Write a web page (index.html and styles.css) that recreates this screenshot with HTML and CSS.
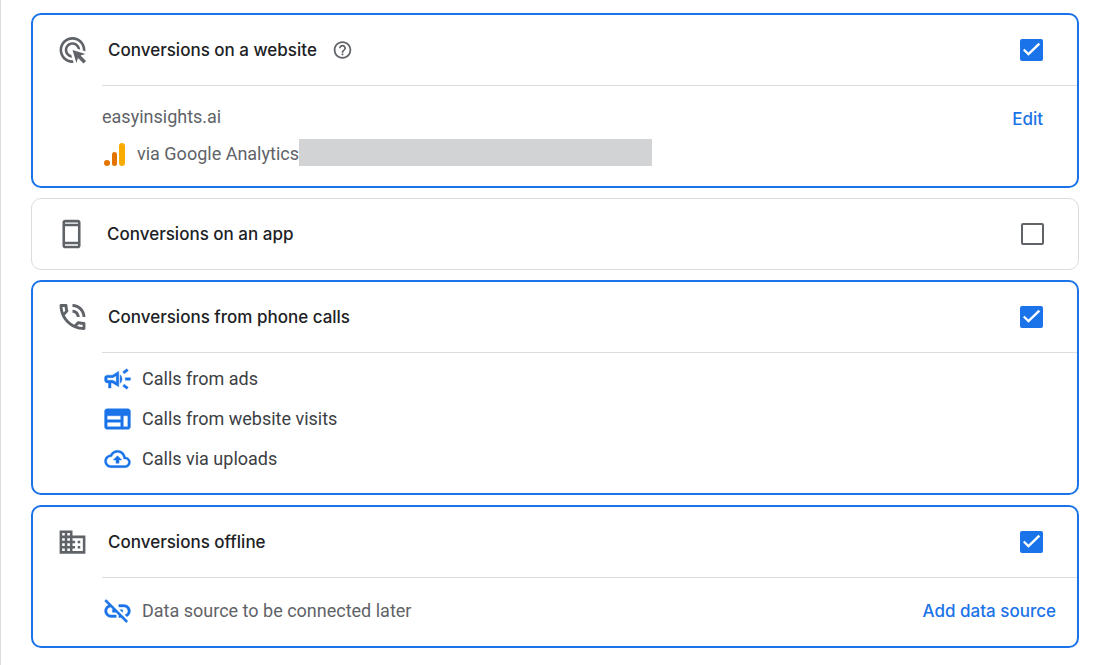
FILE: index.html
```html
<!DOCTYPE html>
<html lang="en">
<head>
  <meta charset="UTF-8">
  <title>Conversion goals</title>
  <link rel="stylesheet" href="styles.css">
</head>
<body>
  <main class="cards">

    <section class="card selected">
      <div class="card-header">
        <svg class="icon" viewBox="0 0 24 24"><path d="M11.71 17.99C8.53 17.84 6 15.22 6 12c0-3.31 2.69-6 6-6 3.22 0 5.84 2.53 5.99 5.71l-2.1-.63C15.48 9.31 13.89 8 12 8c-2.21 0-4 1.79-4 4 0 1.89 1.31 3.48 3.08 3.89l.63 2.1zM22 12c0 .3-.01.6-.04.9l-1.97-.59c.01-.1.01-.21.01-.31 0-4.42-3.58-8-8-8s-8 3.58-8 8 3.58 8 8 8c.1 0 .21 0 .31-.01l.59 1.97c-.3.03-.6.04-.9.04-5.52 0-10-4.48-10-10S6.48 2 12 2s10 4.48 10 10zm-3.77 4.26L22 15l-10-3 3 10 1.26-3.77 4.27 4.27 1.98-1.98-4.28-4.26z"/></svg>
        <label class="title" for="website">Conversions on a website</label>
        <button class="help" type="button" aria-label="Help">
          <svg viewBox="0 0 24 24"><path d="M11 18h2v-2h-2v2zm1-16C6.48 2 2 6.48 2 12s4.48 10 10 10 10-4.48 10-10S17.52 2 12 2zm0 18c-4.41 0-8-3.59-8-8s3.59-8 8-8 8 3.59 8 8-3.59 8-8 8zm0-14c-2.21 0-4 1.79-4 4h2c0-1.1.9-2 2-2s2 .9 2 2c0 2-3 1.75-3 5h2c0-2.25 3-2.5 3-5 0-2.21-1.79-4-4-4z"/></svg>
        </button>
        <input class="check" id="website" type="checkbox" checked>
      </div>
      <div class="card-body website">
        <div class="source">
          <div class="domain">easyinsights.ai</div>
          <div class="analytics">
            <svg class="ga" viewBox="0 0 24 24">
              <circle cx="3" cy="21" r="3" fill="#e37400"/>
              <rect x="8" y="10" width="5" height="14" rx="2.5" fill="#e37400"/>
              <rect x="15" y="1" width="6" height="23" rx="3" fill="#f9ab00"/>
            </svg>
            <span>via Google Analytics</span>
            <span class="redacted"></span>
          </div>
        </div>
        <a class="action" href="#">Edit</a>
      </div>
    </section>

    <section class="card">
      <div class="card-header">
        <svg class="icon" viewBox="0 0 24 24"><path d="M17 1H7c-1.1 0-2 .9-2 2v18c0 1.1.9 2 2 2h10c1.1 0 2-.9 2-2V3c0-1.1-.9-2-2-2zm0 20H7v-1h10v1zm0-3H7V6h10v12zm0-14H7V3h10v1z"/></svg>
        <label class="title" for="app">Conversions on an app</label>
        <input class="check" id="app" type="checkbox">
      </div>
    </section>

    <section class="card selected">
      <div class="card-header">
        <svg class="icon" viewBox="1.2 1.2 21.6 21.6"><path d="M20 15.5c-1.25 0-2.45-.2-3.57-.57-.1-.03-.21-.05-.31-.05-.26 0-.51.1-.71.29l-2.2 2.2c-2.83-1.44-5.15-3.75-6.59-6.59l2.2-2.2c.28-.28.36-.67.25-1.02C8.7 6.45 8.5 5.25 8.5 4c0-.55-.45-1-1-1H4c-.55 0-1 .45-1 1 0 9.39 7.61 17 17 17 .55 0 1-.45 1-1v-3.5c0-.55-.45-1-1-1zM5.03 5h1.5c.07.88.22 1.75.46 2.59L5.79 8.8c-.41-1.21-.67-2.48-.76-3.8zM19 18.97c-1.32-.09-2.59-.35-3.8-.75l1.2-1.2c.85.24 1.71.39 2.6.45v1.5zM19 12h2c0-4.97-4.03-9-9-9v2c3.87 0 7 3.13 7 7zm-4 0h2c0-2.76-2.24-5-5-5v2c1.66 0 3 1.34 3 3z"/></svg>
        <label class="title" for="calls">Conversions from phone calls</label>
        <input class="check" id="calls" type="checkbox" checked>
      </div>
      <ul class="card-body call-list">
        <li>
          <svg class="icon" viewBox="0 0 24 24"><path d="M18 11v2h4v-2h-4zm-2 6.61c.96.71 2.21 1.65 3.2 2.39.4-.53.8-1.07 1.2-1.6-.99-.74-2.24-1.68-3.2-2.4-.4.54-.8 1.08-1.2 1.61zM20.4 5.6c-.4-.53-.8-1.07-1.2-1.6-.99.74-2.24 1.68-3.2 2.4.4.53.8 1.07 1.2 1.6.96-.72 2.21-1.65 3.2-2.4zM4 9c-1.1 0-2 .9-2 2v2c0 1.1.9 2 2 2h1v4h2v-4h1l5 3V6L8 9H4zm5.03 1.71L11 9.53v4.94l-1.97-1.18-.48-.29H4v-2h4.55l.48-.29zM15.5 12c0-1.33-.58-2.53-1.5-3.35v6.69c.92-.81 1.5-2.01 1.5-3.34z"/></svg>
          Calls from ads
        </li>
        <li>
          <svg class="icon" viewBox="0 0 24 24"><path fill-rule="evenodd" d="M20 4H4c-1.1 0-2 .9-2 2v12c0 1.1.9 2 2 2h16c1.1 0 2-.9 2-2V6c0-1.1-.9-2-2-2zM4 9.5h10.5v3H4zM4 14.5h10.5V18H4zM16.5 9.5H20V18h-3.5z"/></svg>
          Calls from website visits
        </li>
        <li>
          <svg class="icon" viewBox="-2.3 -2.3 28.6 28.6"><path d="M19.35 10.04C18.67 6.59 15.64 4 12 4 9.11 4 6.6 5.64 5.35 8.04 2.34 8.36 0 10.91 0 14c0 3.31 2.69 6 6 6h13c2.76 0 5-2.24 5-5 0-2.64-2.05-4.78-4.65-4.96zM19 18H6c-2.21 0-4-1.79-4-4 0-2.05 1.53-3.76 3.56-3.97l1.07-.11.5-.95C8.08 7.14 9.94 6 12 6c2.62 0 4.88 1.86 5.39 4.43l.3 1.5 1.53.11c1.56.1 2.78 1.41 2.78 2.96 0 1.65-1.35 3-3 3zM8 13h2.55v3h2.9v-3H16l-4-4z"/></svg>
          Calls via uploads
        </li>
      </ul>
    </section>

    <section class="card selected">
      <div class="card-header">
        <svg class="icon" viewBox="0 0 24 24"><path d="M12 7V3H2v18h20V7H12zM6 19H4v-2h2v2zm0-4H4v-2h2v2zm0-4H4V9h2v2zm0-4H4V5h2v2zm4 12H8v-2h2v2zm0-4H8v-2h2v2zm0-4H8V9h2v2zm0-4H8V5h2v2zm10 12h-8v-2h2v-2h-2v-2h2v-2h-2V9h8v10zm-2-8h-2v2h2v-2zm0 4h-2v2h2v-2z"/></svg>
        <label class="title" for="offline">Conversions offline</label>
        <input class="check" id="offline" type="checkbox" checked>
      </div>
      <div class="card-body offline">
        <svg class="icon" viewBox="0 0 24 24"><path d="M17 7h-4v1.9h4c1.71 0 3.1 1.39 3.1 3.1 0 1.43-.98 2.63-2.31 2.98l1.46 1.46C20.88 15.61 22 13.95 22 12c0-2.76-2.24-5-5-5zm-1 4h-2.19l2 2H16v-2zM2 4.27l3.11 3.11C3.29 8.12 2 9.91 2 12c0 2.76 2.24 5 5 5h4v-1.9H7c-1.71 0-3.1-1.39-3.1-3.1 0-1.59 1.21-2.9 2.76-3.07L8.73 11H8v2h2.73L13 15.27V17h1.73l4.01 4L20 19.74 3.27 3 2 4.27z"/></svg>
        <span>Data source to be connected later</span>
        <a class="action" href="#">Add data source</a>
      </div>
    </section>

  </main>
</body>
</html>
```
FILE: styles.css
```css
* {
  box-sizing: border-box;
}
body {
  margin: 0;
  background-color: #fff;
  font-family: Roboto, Arial, sans-serif;
  font-size: 18px;
  line-height: 24px;
  color: #5f6368;
}
.cards {
  display: flex;
  flex-direction: column;
  gap: 10px;
  min-height: 100vh;
  padding: 13px 24px 16px 30px;
  border-left: 1px solid #dadce0;
}
.card {
  border: 1px solid #dadce0;
  border-radius: 10px;
}
.card.selected {
  border: 2px solid #1a73e8;
}
.card-header {
  display: flex;
  align-items: center;
  height: 70px;
  padding: 0 34px 0 24px;
}
.icon {
  flex: none;
  width: 31px;
  height: 32px;
  fill: #5f6368;
}
.title {
  margin-left: 20px;
  font-family: Inter, sans-serif;
  font-size: 17px;
  font-weight: 500;
  color: #202124;
}
.help {
  display: flex;
  margin-left: 15px;
  padding: 0;
  border: none;
  background: none;
  cursor: pointer;
}
.help svg {
  width: 21px;
  height: 22px;
  fill: #5f6368;
}

/* checkbox */
.check {
  appearance: none;
  flex: none;
  width: 23px;
  height: 22px;
  margin: 0 0 0 auto;
  border: 2px solid #5f6368;
  border-radius: 2px;
  cursor: pointer;
}
.check:checked {
  border-color: #1a73e8;
  background-color: #1a73e8;
}
.check:checked::before {
  content: "";
  display: block;
  height: 100%;
  background-color: #fff;
  clip-path: polygon(5% 51%, 13% 43%, 34% 64%, 87% 10%, 96% 19%, 34% 82%);
}

.card-body {
  margin: 0 0 0 69px;
  padding: 0;
  border-top: 1px solid #dadce0;
}
.card-body .icon {
  margin-right: 9px;
  fill: #1a73e8;
  stroke: #1a73e8;
  stroke-width: 0.3;
}
.action {
  margin-left: auto;
  font-family: Inter, sans-serif;
  font-size: 17px;
  font-weight: 500;
  color: #1a73e8;
  text-decoration: none;
}
.website {
  display: flex;
  align-items: flex-start;
  padding: 19px 34px 18px 0;
}
.website .action {
  margin-top: 2px;
}
.source {
  display: flex;
  flex-direction: column;
  gap: 10px;
}
.analytics {
  display: flex;
  align-items: center;
  height: 29px;
}
.ga {
  width: 24px;
  height: 24px;
  margin: 0 9px 0 2px;
}
.redacted {
  align-self: flex-start;
  width: 353px;
  height: 27px;
  background-color: #d2d3d5;
}
.call-list {
  padding: 6px 0 14px;
  list-style: none;
  color: #3c4043;
}
.call-list li {
  display: flex;
  align-items: center;
  height: 40px;
}
.offline {
  display: flex;
  align-items: center;
  height: 69px;
  padding: 0 21px 2px 0;
}
```
